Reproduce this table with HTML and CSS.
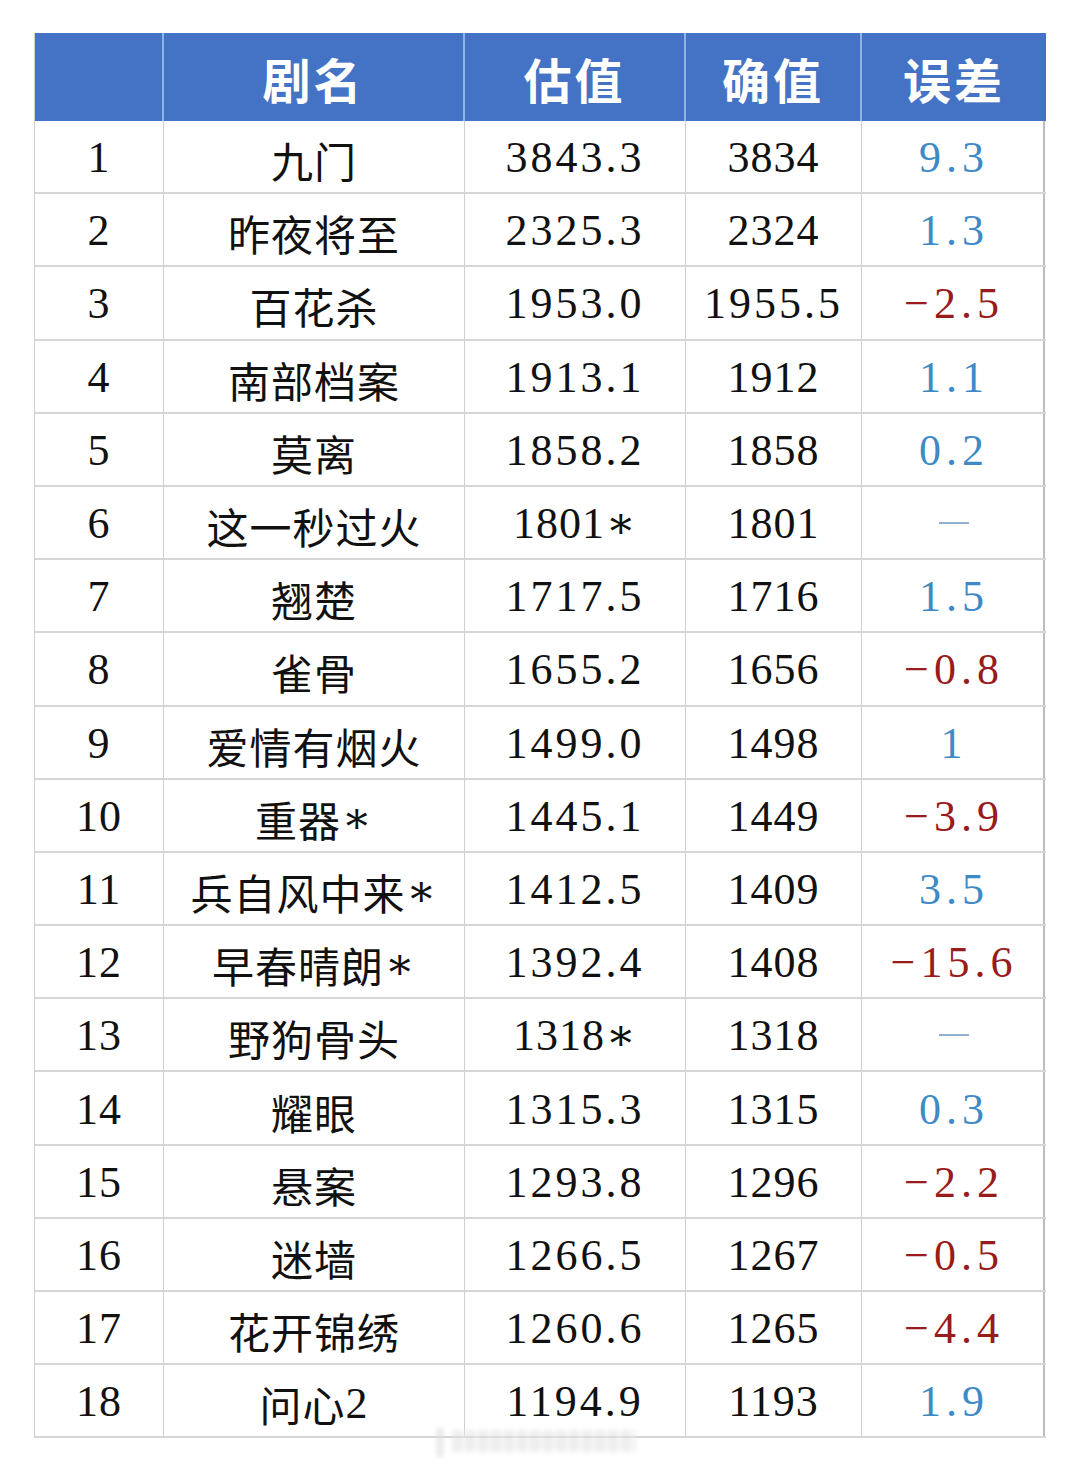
FILE: index.html
```html
<!DOCTYPE html>
<html lang="zh">
<head>
<meta charset="utf-8">
<link rel="stylesheet" href="styles.css">
</head>
<body>
<div class="sheet">
  <div class="table">
    <div class="hd"></div>
    <div class="hd">剧名</div>
    <div class="hd">估值</div>
    <div class="hd">确值</div>
    <div class="hd last">误差</div>

    <div class="c num">1</div><div class="c name">九门</div><div class="c num sp">3843.3</div><div class="c num">3834</div><div class="c num err pos last">9.3</div>
    <div class="c num">2</div><div class="c name">昨夜将至</div><div class="c num sp">2325.3</div><div class="c num">2324</div><div class="c num err pos last">1.3</div>
    <div class="c num">3</div><div class="c name">百花杀</div><div class="c num sp">1953.0</div><div class="c num sp">1955.5</div><div class="c num err neg last">−2.5</div>
    <div class="c num">4</div><div class="c name">南部档案</div><div class="c num sp">1913.1</div><div class="c num">1912</div><div class="c num err pos last">1.1</div>
    <div class="c num">5</div><div class="c name">莫离</div><div class="c num sp">1858.2</div><div class="c num">1858</div><div class="c num err pos last">0.2</div>
    <div class="c num">6</div><div class="c name">这一秒过火</div><div class="c num">1801<span class="ast">∗</span></div><div class="c num">1801</div><div class="c last"><span class="dash"></span></div>
    <div class="c num">7</div><div class="c name">翘楚</div><div class="c num sp">1717.5</div><div class="c num">1716</div><div class="c num err pos last">1.5</div>
    <div class="c num">8</div><div class="c name">雀骨</div><div class="c num sp">1655.2</div><div class="c num">1656</div><div class="c num err neg last">−0.8</div>
    <div class="c num">9</div><div class="c name">爱情有烟火</div><div class="c num sp">1499.0</div><div class="c num">1498</div><div class="c num err pos last">1</div>
    <div class="c num">10</div><div class="c name">重器<span class="ast">∗</span></div><div class="c num sp">1445.1</div><div class="c num">1449</div><div class="c num err neg last">−3.9</div>
    <div class="c num">11</div><div class="c name">兵自风中来<span class="ast">∗</span></div><div class="c num sp">1412.5</div><div class="c num">1409</div><div class="c num err pos last">3.5</div>
    <div class="c num">12</div><div class="c name">早春晴朗<span class="ast">∗</span></div><div class="c num sp">1392.4</div><div class="c num">1408</div><div class="c num err neg last">−15.6</div>
    <div class="c num">13</div><div class="c name">野狗骨头</div><div class="c num">1318<span class="ast">∗</span></div><div class="c num">1318</div><div class="c last"><span class="dash"></span></div>
    <div class="c num">14</div><div class="c name">耀眼</div><div class="c num sp">1315.3</div><div class="c num">1315</div><div class="c num err pos last">0.3</div>
    <div class="c num">15</div><div class="c name">悬案</div><div class="c num sp">1293.8</div><div class="c num">1296</div><div class="c num err neg last">−2.2</div>
    <div class="c num">16</div><div class="c name">迷墙</div><div class="c num sp">1266.5</div><div class="c num">1267</div><div class="c num err neg last">−0.5</div>
    <div class="c num">17</div><div class="c name">花开锦绣</div><div class="c num sp">1260.6</div><div class="c num">1265</div><div class="c num err neg last">−4.4</div>
    <div class="c num">18</div><div class="c name">问心<span class="latin">2</span></div><div class="c num sp">1194.9</div><div class="c num">1193</div><div class="c num err pos last">1.9</div>
  </div>
  <div class="wm"><span class="wm-a"></span><span class="wm-b"></span></div>
</div>
</body>
</html>
```

FILE: styles.css
```css
html, body {
  margin: 0;
  padding: 0;
  background: #ffffff;
}
.sheet {
  position: relative;
  width: 1080px;
  height: 1474px;
  padding: 33px 0 0 34px;
  box-sizing: border-box;
}
.table {
  display: grid;
  grid-template-columns: 129px 301px 221px 176px 184px;
  grid-template-rows: 88px repeat(18, 73.2px);
  width: 1011px;
  border-left: 1px solid #cfcfcf;
  border-right: 2px solid #bdbdbd;
  box-sizing: border-box;
}
.hd {
  background: #4472c4;
  color: #ffffff;
  font-family: "Noto Sans CJK SC", sans-serif;
  font-weight: 700;
  font-size: 48px;
  letter-spacing: 3px;
  display: flex;
  align-items: center;
  justify-content: center;
  border-right: 2px solid #8db3e8;
  padding-top: 2px;
  box-sizing: border-box;
}
.hd.last { border-right: none; }
.c {
  display: flex;
  align-items: center;
  justify-content: center;
  border-right: 1px solid #cfcfcf;
  border-bottom: 2px solid #d6d6d6;
  box-sizing: border-box;
  color: #111111;
}
.c.last { border-right: none; }
.num {
  font-family: "Liberation Serif", "Times New Roman", serif;
  font-size: 44px;
  letter-spacing: 1px;
  padding-top: 2px;
}
.num.sp { letter-spacing: 3px; }
.err { letter-spacing: 5px; }
.pos { color: #3f8ac6; }
.neg { color: #991b1b; }
.name {
  font-family: "Noto Sans CJK SC", sans-serif;
  font-size: 42px;
  font-weight: 400;
  padding-top: 6px;
  letter-spacing: 1px;
}
.ast {
  font-family: "DejaVu Serif", serif;
  font-size: 44px;
  margin-left: 1px;
  position: relative;
  top: -1px;
}
.latin {
  font-family: "Liberation Serif", serif;
  font-size: 44px;
}
.dash {
  display: block;
  width: 30px;
  height: 2px;
  background: #93aecb;
}
.wm {
  position: absolute;
  left: 436px;
  top: 1428px;
  width: 200px;
  height: 36px;
  display: flex;
  gap: 8px;
  filter: blur(2px);
  opacity: 0.5;
}
.wm-a {
  width: 8px;
  height: 30px;
  background: #d8d8d8;
  border-radius: 4px;
}
.wm-b {
  flex: 1;
  height: 22px;
  margin-top: 2px;
  background: repeating-linear-gradient(90deg, #dedede 0 10px, #f4f4f4 10px 13px);
}
```
